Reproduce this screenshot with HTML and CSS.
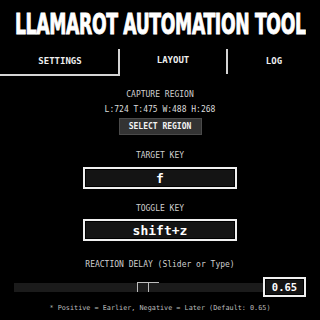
FILE: index.html
```html
<!DOCTYPE html>
<html>
<head>
<meta charset="utf-8">
<link rel="stylesheet" href="styles.css">
</head>
<body>
<div class="app">
  <h1 class="title"><span class="title-text">LLAMAROT AUTOMATION TOOL</span></h1>
  <nav class="tabs">
    <div class="tab tab-active">SETTINGS</div>
    <div class="tab tab-mid">LAYOUT</div>
    <div class="tab">LOG</div>
  </nav>
  <section class="panel">
    <div class="label label-capture">CAPTURE REGION</div>
    <div class="coords">L:724 T:475 W:488 H:268</div>
    <div class="btn">SELECT REGION</div>
    <div class="label label-target">TARGET KEY</div>
    <div class="keybox keybox-target">f</div>
    <div class="label label-toggle">TOGGLE KEY</div>
    <div class="keybox keybox-toggle">shift+z</div>
    <div class="label label-delay">REACTION DELAY (Slider or Type)</div>
    <div class="slider-row">
      <div class="track"><div class="thumb"><span class="thumb-a"></span><span class="thumb-b"></span></div></div>
      <div class="valbox">0.65</div>
    </div>
    <div class="note">* Positive = Earlier, Negative = Later (Default: 0.65)</div>
  </section>
</div>
</body>
</html>
```

FILE: styles.css
```css
html, body {
  margin: 0;
  padding: 0;
  background: #000;
}
body {
  width: 320px;
  height: 320px;
  overflow: hidden;
  font-family: "DejaVu Sans Mono", "Liberation Mono", monospace;
  color: #d8d8d8;
}
.app {
  display: flex;
  flex-direction: column;
  width: 320px;
}
.title {
  margin: 0;
  height: 49px;
  width: 320px;
  overflow: hidden;
  display: flex;
  justify-content: center;
  align-items: flex-start;
}
.title-text {
  display: inline-block;
  flex: none;
  margin-top: 8px;
  font-family: "DejaVu Sans Condensed", "DejaVu Sans", sans-serif;
  font-weight: 900;
  font-size: 29px;
  line-height: 32px;
  color: #fff;
  letter-spacing: -0.5px;
  -webkit-text-stroke: 0.9px #fff;
  transform: scaleX(0.66);
  white-space: nowrap;
}
.tabs {
  display: grid;
  grid-template-columns: 120px 108px 1fr;
  height: 27px;
}
.tab {
  display: flex;
  justify-content: center;
  align-items: center;
  padding-bottom: 3px;
  font-size: 9px;
  font-weight: bold;
  color: #eee;
  box-sizing: border-box;
}
.tab-active {
  border-right: 2px solid #d4d4d4;
  border-bottom: 2px solid #d4d4d4;
  padding-bottom: 1px;
  padding-left: 2px;
}
.tab-mid {
  border-right: 2px solid #d4d4d4;
  margin-bottom: 2px;
}
.panel {
  display: flex;
  flex-direction: column;
  align-items: center;
}
.label {
  font-size: 8px;
  line-height: 10px;
  height: 10px;
  color: #cfcfcf;
  white-space: nowrap;
}
.label-capture { margin-top: 14px; }
.coords {
  margin-top: 5px;
  font-size: 8px;
  line-height: 10px;
  color: #dcdcdc;
}
.btn {
  margin-top: 3px;
  width: 83px;
  height: 17px;
  box-sizing: border-box;
  background: #333;
  border: 1px solid #4a4a4a;
  color: #f2f2f2;
  font-size: 8px;
  font-weight: bold;
  display: flex;
  align-items: center;
  justify-content: center;
}
.label-target { margin-top: 16px; }
.keybox {
  width: 154px;
  height: 22px;
  box-sizing: border-box;
  border: 2px solid #f0f0f0;
  background: #141414;
  color: #fff;
  font-size: 13px;
  font-weight: bold;
  display: flex;
  align-items: center;
  justify-content: center;
  box-shadow: inset 0 0 0 1px #000;
}
.keybox-target { margin-top: 6px; }
.label-toggle { margin-top: 15px; }
.keybox-toggle { margin-top: 5px; }
.label-delay { margin-top: 19px; }
.slider-row {
  margin-top: 7px;
  align-self: stretch;
  display: flex;
  align-items: center;
  padding-left: 14px;
  padding-right: 14px;
  height: 20px;
}
.track {
  flex: 1;
  height: 9px;
  background: #1b1b1b;
  position: relative;
}
.thumb {
  position: absolute;
  left: 123px;
  top: -1px;
  width: 22px;
  height: 10px;
  display: flex;
}
.thumb-a, .thumb-b {
  display: block;
  width: 11px;
  height: 10px;
  box-sizing: border-box;
  border-left: 1px solid #bdbdbd;
  border-top: 1px solid #bdbdbd;
}
.valbox {
  width: 43px;
  height: 20px;
  box-sizing: border-box;
  border: 2px solid #f0f0f0;
  background: #141414;
  color: #fff;
  font-size: 10.5px;
  font-weight: bold;
  display: flex;
  align-items: center;
  justify-content: center;
  box-shadow: inset 0 0 0 1px #000;
}
.note {
  margin-top: 6px;
  font-size: 6.8px;
  line-height: 10px;
  color: #bdbdbd;
  white-space: nowrap;
}
```
